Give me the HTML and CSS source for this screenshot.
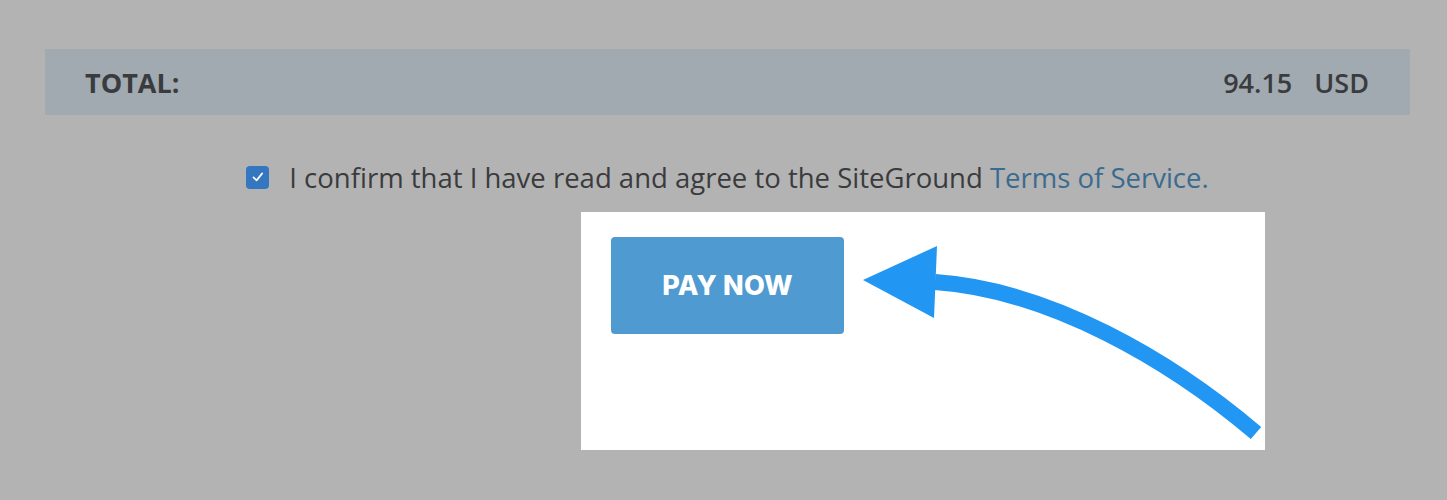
FILE: index.html
```html
<!DOCTYPE html>
<html lang="en">

<head>
  <meta charset="UTF-8">
  <meta name="viewport" content="width=device-width, initial-scale=1.0">
  <title>Checkout</title>
  <link rel="stylesheet" href="styles.css">
</head>

<body>

  <main class="checkout">
    <div class="checkout__total">
      <span class="checkout__label">TOTAL:</span>
      <span class="checkout__sum">
        <span>94.15</span>
        <span class="checkout__currency">USD</span>
      </span>
    </div>

    <label class="checkout__confirm">
      <span class="checkout__box">
        <svg width="16" height="16" viewBox="0 0 16 16">
          <path d="M3.5 8.4 L6.6 11.4 L12.2 4.4" fill="none" stroke="#fff" stroke-width="1.7" stroke-linecap="round" stroke-linejoin="round"/>
        </svg>
      </span>
      <span>I confirm that I have read and agree to the SiteGround <a href="#">Terms of Service.</a></span>
    </label>

    <div class="checkout__focus">
      <button class="checkout__button" type="button">PAY NOW</button>
      <svg class="checkout__arrow" width="421" height="213" viewBox="0 0 421 213">
        <path d="M91 45 C 206 53, 326 123, 412 196" fill="none" stroke="#2196f3" stroke-width="16"/>
        <polygon points="19,43 93,9 90,81" fill="#2196f3"/>
      </svg>
    </div>
  </main>

</body>

</html>
```

FILE: styles.css
```css
*,
*:after,
*:before {
  margin: 0;
  padding: 0;
  box-sizing: border-box;
}

body {
  background: #b3b3b3;
  font-family: "Open Sans", "Liberation Sans", sans-serif;
  color: #3a3b3d;
  height: 500px;
  overflow: hidden;
}

.checkout {
  padding: 49px 37px 0 45px;
}

.checkout__total {
  display: flex;
  justify-content: space-between;
  align-items: center;
  height: 66px;
  padding: 0 41px 0 40px;
  background: #a1a9b1;
  font-size: 27px;
}

.checkout__label {
  font-weight: 700;
}

.checkout__sum {
  display: flex;
  font-weight: 600;
}

.checkout__currency {
  margin-left: 22px;
}

.checkout__confirm {
  display: flex;
  justify-content: center;
  align-items: center;
  gap: 20px;
  height: 34px;
  margin-top: 45px;
  font-size: 27.5px;
}

.checkout__confirm a {
  color: #3a6b8f;
  text-decoration: none;
}

.checkout__box {
  display: flex;
  align-items: center;
  justify-content: center;
  width: 23px;
  height: 23px;
  border-radius: 4px;
  background: #3477c0;
}

.checkout__focus {
  display: flex;
  align-items: flex-start;
  width: 684px;
  height: 238px;
  margin: 18px 0 0 536px;
  padding: 25px 0 0 30px;
  background: #fff;
}

.checkout__button {
  width: 233px;
  height: 97px;
  border: 0;
  border-radius: 4px;
  background: #4f9ad0;
  color: #fff;
  font-family: Inter, "Liberation Sans", sans-serif;
  font-weight: 800;
  font-size: 27px;
  letter-spacing: 0.2px;
  cursor: pointer;
}

.checkout__arrow {
  display: block;
  flex-shrink: 0;
}
```
